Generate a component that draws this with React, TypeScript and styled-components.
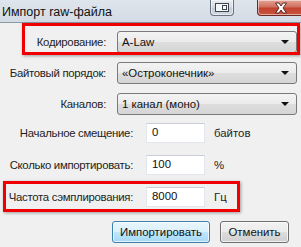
import styled, { createGlobalStyle } from "styled-components";

const GlobalStyle = createGlobalStyle`
  body {
    margin: 0;
    background: #f0f0f0;
    font-family: "Liberation Sans", Arial, sans-serif;
  }
`;

const Window = styled.div`
  width: 301px;
  height: 247px;
  overflow: hidden;
  background: #f0f0f0;
  font-size: 11.4px;
  color: #1e1e1e;
`;

const TitleBar = styled.div`
  height: 22px;
  display: flex;
  align-items: flex-start;
  background: linear-gradient(#dfe5ec, #d3dbe4);
  border-bottom: 1px solid #8e99a6;
`;

const Title = styled.span`
  padding: 5px 0 0 2px;
  font-size: 12.5px;
  color: #111;
  flex: 1;
`;

const CaptionButton = styled.div<{ $close?: boolean }>`
  height: 16px;
  width: ${(p) => (p.$close ? "47px" : "24px")};
  margin-left: ${(p) => (p.$close ? "23px" : "0")};
  margin-right: ${(p) => (p.$close ? "-3px" : "0")};
  box-sizing: border-box;
  border: 1px solid ${(p) => (p.$close ? "#6e2a22" : "#6a7480")};
  border-top: none;
  border-radius: 0 0 4px 4px;
  background: ${(p) =>
    p.$close
      ? "linear-gradient(#e3a598, #d0705f 45%, #c2412f 55%, #c9553f)"
      : "linear-gradient(#e9edf1, #d6dde4 45%, #c5ced8 55%, #d0d8e0)"};
  display: flex;
  align-items: center;
  justify-content: center;
  box-shadow: inset 0 0 0 1px rgba(255, 255, 255, 0.5);
`;

const Content = styled.div`
  display: flex;
  flex-direction: column;
  padding-top: 8px;
`;

const Row = styled.div<{ $gap: number; $label: number }>`
  position: relative;
  display: flex;
  align-items: center;
  margin-bottom: ${(p) => p.$gap}px;
  & > label {
    width: ${(p) => p.$label}px;
  }
`;

const Highlight = styled.div<{ $l: number; $t: number; $w: number; $h: number }>`
  position: absolute;
  left: ${(p) => p.$l}px;
  top: ${(p) => p.$t}px;
  width: ${(p) => p.$w}px;
  height: ${(p) => p.$h}px;
  box-sizing: border-box;
  border: 3px solid #f00000;
  box-shadow: 1px 1px 3px rgba(0, 0, 0, 0.35);
  pointer-events: none;
`;

const Label = styled.label`
  text-align: right;
  flex-shrink: 0;
  white-space: nowrap;
  letter-spacing: -0.3px;
`;

const Combo = styled.div`
  margin-left: 11px;
  width: 180px;
  height: 22px;
  box-sizing: border-box;
  border: 1px solid #7a7a7a;
  border-radius: 3px;
  background: linear-gradient(#f3f3f3, #ebebeb 50%, #dddddd 51%, #d5d5d5);
  display: flex;
  align-items: center;
  padding: 0 7px 0 4px;
  color: #111;
`;

const ComboText = styled.span`
  flex: 1;
`;

const Arrow = styled.span`
  width: 0;
  height: 0;
  border-left: 4px solid transparent;
  border-right: 4px solid transparent;
  border-top: 4px solid #111;
`;

const Input = styled.div`
  margin-left: 13px;
  width: 59px;
  height: 20px;
  box-sizing: border-box;
  background: #fff;
  border: 1px solid #e2e7ee;
  border-top-color: #c9ced6;
  padding: 2px 0 0 5px;
  color: #111;
`;

const Unit = styled.span`
  margin-left: 9px;
`;

const ButtonRow = styled.div`
  display: flex;
  gap: 10px;
  padding-left: 112px;
`;

const Button = styled.div<{ $default?: boolean }>`
  height: 22px;
  width: ${(p) => (p.$default ? "98px" : "69px")};
  box-sizing: border-box;
  border: 1px solid ${(p) => (p.$default ? "#3c7fb1" : "#707070")};
  border-radius: 3px;
  background: ${(p) =>
    p.$default
      ? "linear-gradient(#eaf6fd, #d9f0fc 50%, #bee6fd 51%, #a7d9f5)"
      : "linear-gradient(#f2f2f2, #ebebeb 50%, #dddddd 51%, #cfcfcf)"};
  box-shadow: inset 0 0 0 1px rgba(255, 255, 255, 0.7);
  display: flex;
  align-items: center;
  justify-content: center;
  color: #111;
`;

const RestoreIcon = () => (
  <svg width="14" height="9" viewBox="0 0 14 9">
    <rect x="0.5" y="0.5" width="13" height="8" fill="#f4f6f8" stroke="#3c4650" />
    <rect x="7" y="2" width="5" height="5" fill="#3c4650" />
    <rect x="8" y="3" width="3" height="3" fill="#fff" />
  </svg>
);

const CloseIcon = () => (
  <svg width="14" height="12" viewBox="0 0 14 12">
    <path
      d="M1.5 1 H5 L7 4 L9 1 H12.5 L9 6 L12.5 11 H9 L7 8 L5 11 H1.5 L5 6 Z"
      fill="#fff"
      stroke="#4a1a14"
      strokeWidth="0.9"
      strokeLinejoin="round"
    />
  </svg>
);

const App = () => (
  <Window>
    <GlobalStyle />
    <TitleBar>
      <Title>Импорт raw-файла</Title>
      <CaptionButton>
        <RestoreIcon />
      </CaptionButton>
      <CaptionButton $close>
        <CloseIcon />
      </CaptionButton>
    </TitleBar>
    <Content>
      <Row $gap={9} $label={106}>
        <Highlight $l={22} $t={-8} $w={278} $h={32} />
        <Label>Кодирование:</Label>
        <Combo>
          <ComboText>A-Law</ComboText>
          <Arrow />
        </Combo>
      </Row>
      <Row $gap={9} $label={106}>
        <Label>Байтовый порядок:</Label>
        <Combo>
          <ComboText>«Остроконечник»</ComboText>
          <Arrow />
        </Combo>
      </Row>
      <Row $gap={8} $label={106}>
        <Label>Каналов:</Label>
        <Combo>
          <ComboText>1 канал (моно)</ComboText>
          <Arrow />
        </Combo>
      </Row>
      <Row $gap={12} $label={133}>
        <Label>Начальное смещение:</Label>
        <Input>0</Input>
        <Unit>байтов</Unit>
      </Row>
      <Row $gap={12} $label={133}>
        <Label>Сколько импортировать:</Label>
        <Input>100</Input>
        <Unit>%</Unit>
      </Row>
      <Row $gap={14} $label={133}>
        <Highlight $l={3} $t={-6} $w={237} $h={31} />
        <Label>Частота сэмплирования:</Label>
        <Input>8000</Input>
        <Unit>Гц</Unit>
      </Row>
      <ButtonRow>
        <Button $default>Импортировать</Button>
        <Button>Отменить</Button>
      </ButtonRow>
    </Content>
  </Window>
);

export default App;
